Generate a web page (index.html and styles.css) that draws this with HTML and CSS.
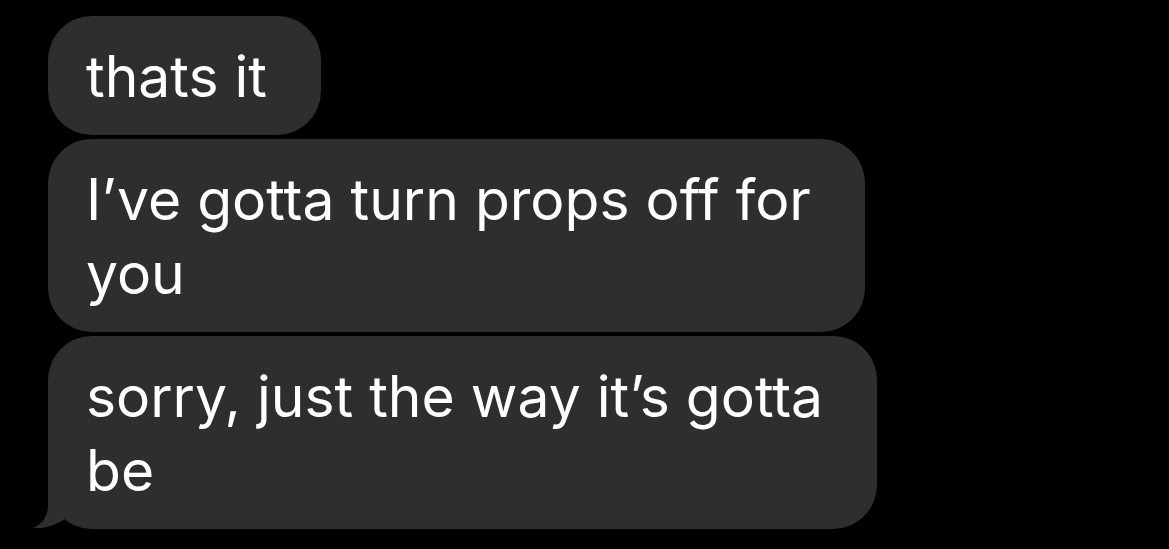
FILE: index.html
```html
<!DOCTYPE html>
<html lang="en">
<head>
    <meta charset="UTF-8">
    <meta name="viewport" content="width=device-width, initial-scale=1.0">
    <title>Messages</title>
    <link rel="stylesheet" href="styles.css">
</head>
<body>
    <div class="thread">
        <div class="bubble">thats it</div>
        <div class="bubble">I’ve gotta turn props off for<br>you</div>
        <div class="bubble last">
            sorry, just the way it’s gotta<br>be
            <svg class="tail" width="60" height="40" viewBox="0 0 60 40">
                <path d="M16 0 L16 16 C16 28 10 35 1 39 C13 40 25 36 34 29 L50 20 L50 0 Z" fill="#2e2e30"/>
            </svg>
        </div>
    </div>
</body>
</html>
```

FILE: styles.css
```css
body {
    margin: 0;
    padding: 0;
    background: #000;
    font-family: Inter, 'Noto Sans', sans-serif;
}

.thread {
    display: flex;
    flex-direction: column;
    align-items: flex-start;
    gap: 4px;
    padding: 16px 0 0 48px;
}

.bubble {
    position: relative;
    background: #2e2e30;
    color: #fff;
    font-size: 57px;
    line-height: 74px;
    white-space: nowrap;
    padding: 24px 54px 21px 38px;
    border-radius: 44px;
}

.tail {
    position: absolute;
    left: -16px;
    bottom: 0;
}
```
